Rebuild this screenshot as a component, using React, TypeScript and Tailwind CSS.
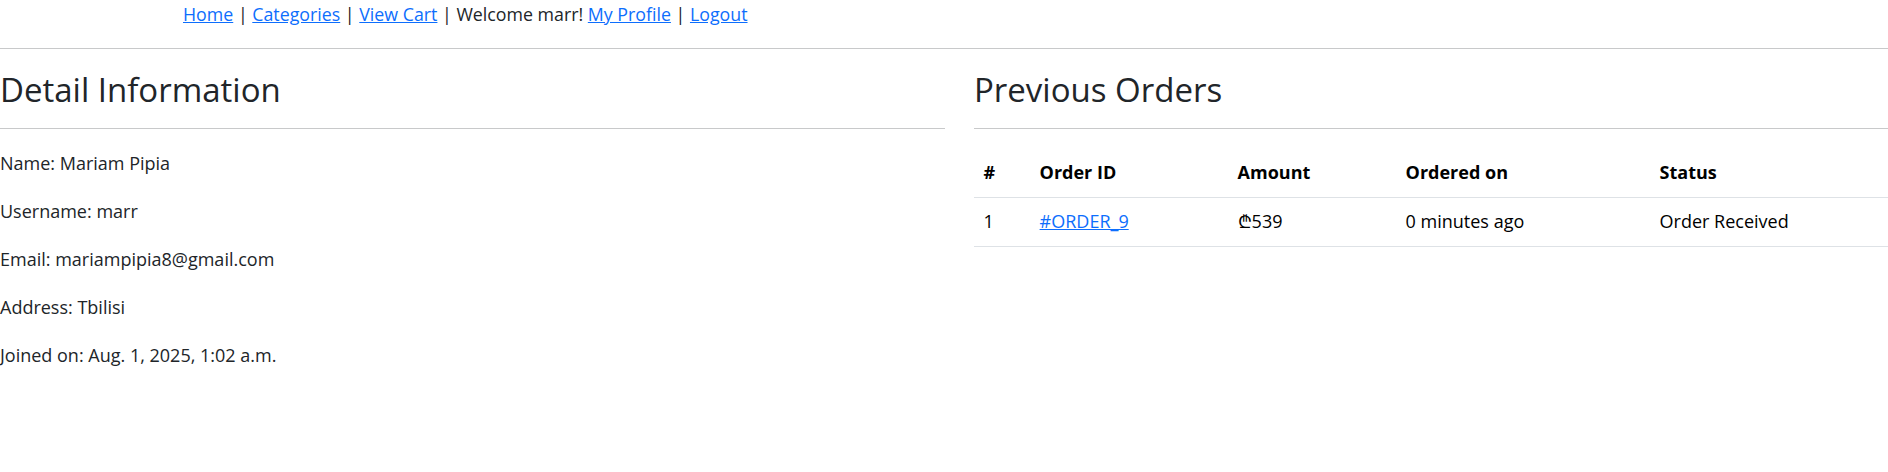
const details = [
  "Name: Mariam Pipia",
  "Username: marr",
  "Email: mariampipia8@gmail.com",
  "Address: Tbilisi",
  "Joined on: Aug. 1, 2025, 1:02 a.m.",
];

function NavLink({ children }: { children: React.ReactNode }) {
  return (
    <a href="#" className="text-[#0d6efd] underline">
      {children}
    </a>
  );
}

export default function App() {
  return (
    <div className="min-h-[472px] bg-white font-['Open_Sans',sans-serif] text-[18px] leading-[28.8px] text-[#212529]">
      <nav className="h-[29px] pl-[183px] text-[17.8px]">
        <NavLink>Home</NavLink> | <NavLink>Categories</NavLink> |{" "}
        <NavLink>View Cart</NavLink> | Welcome marr! <NavLink>My Profile</NavLink> |{" "}
        <NavLink>Logout</NavLink>
      </nav>
      <hr className="mt-[19px] border-[#c8c9ca]" />

      <div className="mt-[18px] grid grid-cols-[945px_1fr] gap-x-[29px]">
        <section>
          <h2 className="h-[46px] text-[33px] leading-[46px] font-normal">Detail Information</h2>
          <hr className="mt-[15px] border-[#c8c9ca]" />
          <div className="mt-[20px] flex flex-col gap-[19.2px]">
            {details.map((d) => (
              <p key={d}>{d}</p>
            ))}
          </div>
        </section>

        <section>
          <h2 className="h-[46px] text-[33px] leading-[46px] font-normal">Previous Orders</h2>
          <hr className="mt-[15px] border-[#c8c9ca]" />
          <table className="mt-[19px] w-full table-fixed border-collapse text-left text-black">
            <thead>
              <tr className="h-[49px] border-b border-[#dee2e6]">
                <th className="w-[56px] px-[9.6px] font-bold">#</th>
                <th className="w-[198px] px-[9.6px] font-bold">Order ID</th>
                <th className="w-[168px] px-[9.6px] font-bold">Amount</th>
                <th className="w-[254px] px-[9.6px] font-bold">Ordered on</th>
                <th className="px-[9.6px] font-bold">Status</th>
              </tr>
            </thead>
            <tbody>
              <tr className="h-[49px] border-b border-[#dee2e6]">
                <td className="px-[9.6px]">1</td>
                <td className="px-[9.6px]">
                  <a href="#" className="text-[#0d6efd] underline">#ORDER_9</a>
                </td>
                <td className="px-[9.6px]">₾539</td>
                <td className="px-[9.6px]">0 minutes ago</td>
                <td className="px-[9.6px]">Order Received</td>
              </tr>
            </tbody>
          </table>
        </section>
      </div>
    </div>
  );
}
